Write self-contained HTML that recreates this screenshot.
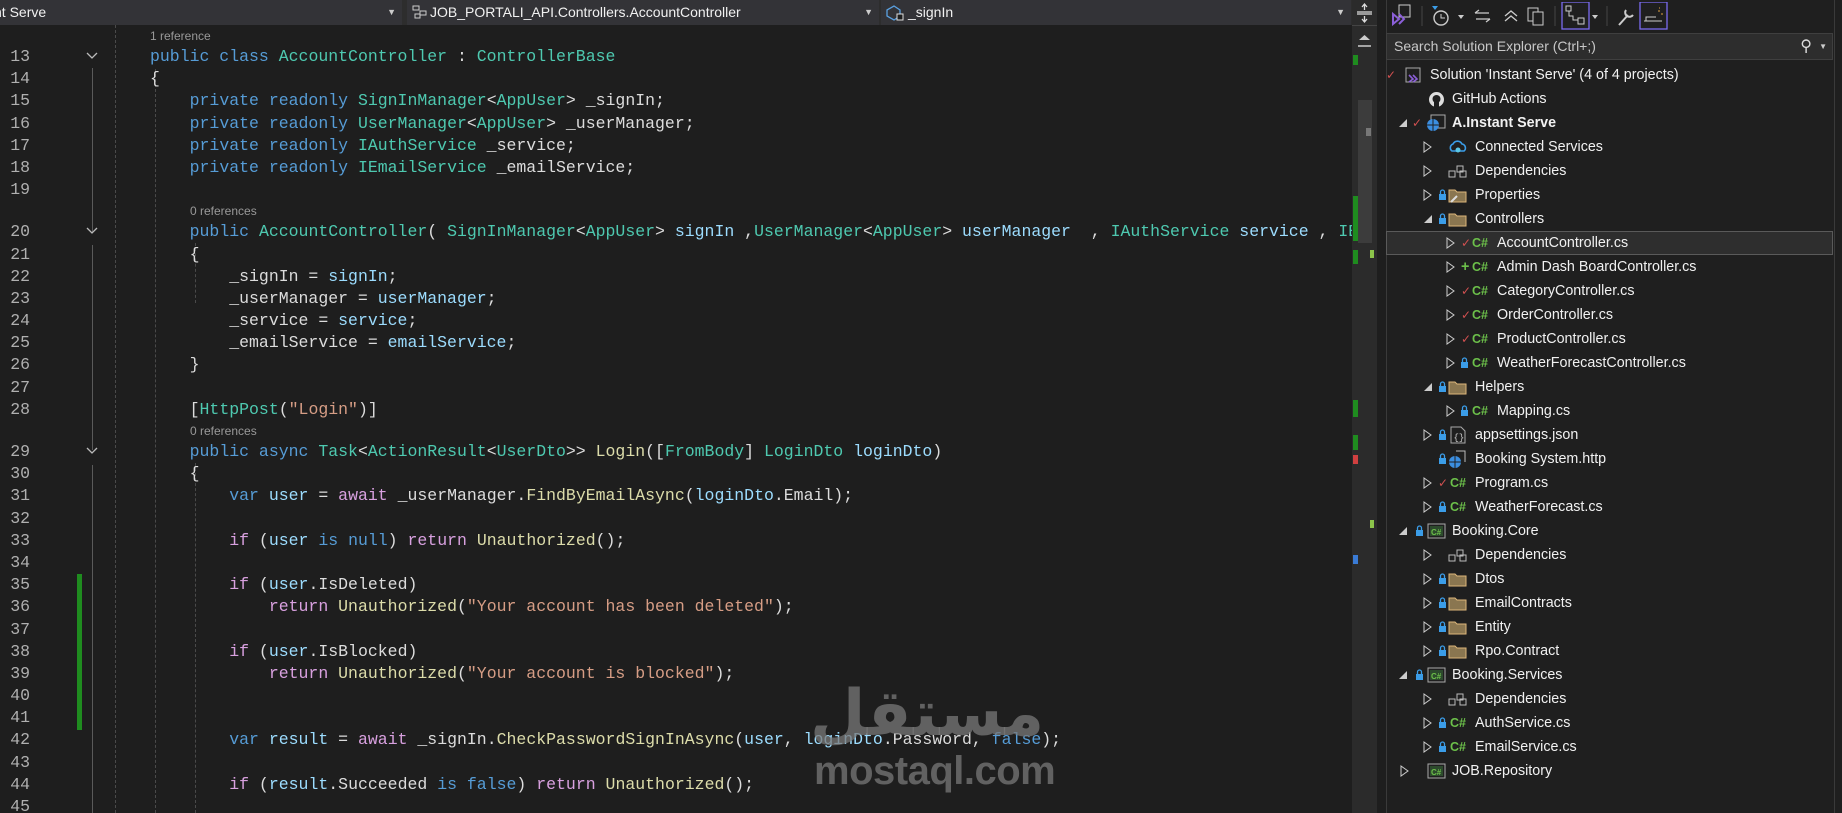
<!DOCTYPE html>
<html><head><meta charset="utf-8">
<style>
*{margin:0;padding:0;box-sizing:border-box}
body{width:1842px;height:813px;background:#1e1e1e;overflow:hidden;position:relative;font-family:"Liberation Sans",sans-serif}
.nav{position:absolute;left:0;top:0;width:1352px;height:25px;background:#2d2d2d}
.dd{position:absolute;top:0;height:25px;background:#333337;color:#f1f1f1;font-size:14px;line-height:25px;white-space:nowrap;overflow:hidden}
.dd .ar{position:absolute;right:6px;top:0;font-size:9px;color:#ccc}
#ed{position:absolute;left:0;top:25px;width:1352px;height:788px;overflow:hidden;background:#1e1e1e}
#code{position:absolute;left:0;top:1px;width:1352px}
.l{height:22.2px;line-height:22.2px;position:relative;white-space:pre;font-family:"Liberation Mono",monospace;font-size:16.5px;color:#dcdcdc}
.l .n{position:absolute;left:0;width:30px;text-align:right;color:#b0b0b0}
.l .t{position:absolute;left:150px}
.cl{height:20px;line-height:20px;position:relative;font-size:12px;color:#999;white-space:pre}
.k{color:#569cd6}.ty{color:#4ec9b0}.v{color:#9cdcfe}.m{color:#dcdcaa}.s{color:#d69d85}.c{color:#d8a0df}
.vl{position:absolute;width:0;border-left:1px solid #5a5a5a}
.dl{position:absolute;width:0;border-left:1px dashed #4a4a4a}
.chev{position:absolute;left:86px;width:12px;height:12px}
#sb{position:absolute;left:1352px;top:0;width:25px;height:813px;background:#2b2b2b}
#se{position:absolute;left:1386px;top:0;width:456px;height:813px;background:#1f1f1f;border-left:1px solid #3a3a3a}
.srch{position:absolute;left:1386px;top:33px;width:447px;height:27px;background:#2d2d2d;border:1px solid #3f3f3f;color:#c8c8c8;font-size:14px;line-height:25px;padding-left:7px}
.r{position:absolute;left:0;height:24px;width:100%;color:#f1f1f1;font-size:14.3px;line-height:24px;white-space:nowrap}
.r span,.r svg{position:absolute}
.cs{color:#6cc04a;font-weight:bold;font-size:12.5px}
.chk{color:#d05050;font-size:12px}
</style></head><body>

<div class="nav">
 <div class="dd" style="left:0;width:402px;padding-left:0"><span style="position:absolute;left:-6px">nt Serve</span><span class="ar">▼</span></div>
 <div class="dd" style="left:407px;width:472px"><svg style="position:absolute;left:5px;top:5px" width="16" height="14"><rect x="1" y="1" width="6" height="4" fill="none" stroke="#ccc"/><rect x="8" y="6" width="6" height="4" fill="none" stroke="#ccc"/><rect x="3" y="9" width="5" height="4" fill="none" stroke="#ccc"/></svg><span style="position:absolute;left:23px">JOB_PORTALI_API.Controllers.AccountController</span><span class="ar">▼</span></div>
 <div class="dd" style="left:881px;width:470px"><svg style="position:absolute;left:4px;top:4px" width="22" height="18"><path d="M2 6 L9 2 L15 6 L15 12 L9 16 L2 12Z" fill="none" stroke="#5aa0e0" stroke-width="1.3"/><rect x="12" y="10" width="6" height="6" fill="#1e1e1e" stroke="#ddd"/></svg><span style="position:absolute;left:27px">_signIn</span><span class="ar">▼</span></div>
</div>

<div id="ed">
 <div class="vl" style="left:92px;top:43px;height:165px"></div>
 <div class="vl" style="left:92px;top:220px;height:205px"></div>
 <div class="vl" style="left:92px;top:440px;height:360px"></div>
 <div class="dl" style="left:115px;top:0;height:788px"></div>
 <div class="dl" style="left:155px;top:44px;height:744px"></div>
 <div class="dl" style="left:195px;top:218px;height:60px"></div>
 <div class="dl" style="left:195px;top:438px;height:350px"></div>
 <div style="position:absolute;left:77px;top:549px;width:5px;height:156px;background:#1f8c1f"></div>
 <svg class="chev" style="top:25px"><path d="M1 3 L6 8 L11 3" fill="none" stroke="#bbb" stroke-width="1.3"/></svg>
 <svg class="chev" style="top:200px"><path d="M1 3 L6 8 L11 3" fill="none" stroke="#bbb" stroke-width="1.3"/></svg>
 <svg class="chev" style="top:420px"><path d="M1 3 L6 8 L11 3" fill="none" stroke="#bbb" stroke-width="1.3"/></svg>
 <div id="code">
  <div class="cl"><span style="position:absolute;left:150px">1 reference</span></div>
  <div class="l"><span class="n">13</span><span class="t"><span class="k">public class</span> <span class="ty">AccountController</span> : <span class="ty">ControllerBase</span></span></div>
  <div class="l"><span class="n">14</span><span class="t">{</span></div>
  <div class="l"><span class="n">15</span><span class="t">    <span class="k">private readonly</span> <span class="ty">SignInManager</span>&lt;<span class="ty">AppUser</span>&gt; _signIn;</span></div>
  <div class="l"><span class="n">16</span><span class="t">    <span class="k">private readonly</span> <span class="ty">UserManager</span>&lt;<span class="ty">AppUser</span>&gt; _userManager;</span></div>
  <div class="l"><span class="n">17</span><span class="t">    <span class="k">private readonly</span> <span class="ty">IAuthService</span> _service;</span></div>
  <div class="l"><span class="n">18</span><span class="t">    <span class="k">private readonly</span> <span class="ty">IEmailService</span> _emailService;</span></div>
  <div class="l"><span class="n">19</span><span class="t"> </span></div>
  <div class="cl"><span style="position:absolute;left:190px">0 references</span></div>
  <div class="l"><span class="n">20</span><span class="t">    <span class="k">public</span> <span class="ty">AccountController</span>( <span class="ty">SignInManager</span>&lt;<span class="ty">AppUser</span>&gt; <span class="v">signIn</span> ,<span class="ty">UserManager</span>&lt;<span class="ty">AppUser</span>&gt; <span class="v">userManager</span>  , <span class="ty">IAuthService</span> <span class="v">service</span> , <span class="ty">IEmailService</span> <span class="v">emailService</span>)</span></div>
  <div class="l"><span class="n">21</span><span class="t">    {</span></div>
  <div class="l"><span class="n">22</span><span class="t">        _signIn = <span class="v">signIn</span>;</span></div>
  <div class="l"><span class="n">23</span><span class="t">        _userManager = <span class="v">userManager</span>;</span></div>
  <div class="l"><span class="n">24</span><span class="t">        _service = <span class="v">service</span>;</span></div>
  <div class="l"><span class="n">25</span><span class="t">        _emailService = <span class="v">emailService</span>;</span></div>
  <div class="l"><span class="n">26</span><span class="t">    }</span></div>
  <div class="l"><span class="n">27</span><span class="t"> </span></div>
  <div class="l"><span class="n">28</span><span class="t">    [<span class="ty">HttpPost</span>(<span class="s">"Login"</span>)]</span></div>
  <div class="cl"><span style="position:absolute;left:190px">0 references</span></div>
  <div class="l"><span class="n">29</span><span class="t">    <span class="k">public async</span> <span class="ty">Task</span>&lt;<span class="ty">ActionResult</span>&lt;<span class="ty">UserDto</span>&gt;&gt; <span class="m">Login</span>([<span class="ty">FromBody</span>] <span class="ty">LoginDto</span> <span class="v">loginDto</span>)</span></div>
  <div class="l"><span class="n">30</span><span class="t">    {</span></div>
  <div class="l"><span class="n">31</span><span class="t">        <span class="k">var</span> <span class="v">user</span> = <span class="c">await</span> _userManager.<span class="m">FindByEmailAsync</span>(<span class="v">loginDto</span>.Email);</span></div>
  <div class="l"><span class="n">32</span><span class="t"> </span></div>
  <div class="l"><span class="n">33</span><span class="t">        <span class="c">if</span> (<span class="v">user</span> <span class="k">is null</span>) <span class="c">return</span> <span class="m">Unauthorized</span>();</span></div>
  <div class="l"><span class="n">34</span><span class="t"> </span></div>
  <div class="l"><span class="n">35</span><span class="t">        <span class="c">if</span> (<span class="v">user</span>.IsDeleted)</span></div>
  <div class="l"><span class="n">36</span><span class="t">            <span class="c">return</span> <span class="m">Unauthorized</span>(<span class="s">"Your account has been deleted"</span>);</span></div>
  <div class="l"><span class="n">37</span><span class="t"> </span></div>
  <div class="l"><span class="n">38</span><span class="t">        <span class="c">if</span> (<span class="v">user</span>.IsBlocked)</span></div>
  <div class="l"><span class="n">39</span><span class="t">            <span class="c">return</span> <span class="m">Unauthorized</span>(<span class="s">"Your account is blocked"</span>);</span></div>
  <div class="l"><span class="n">40</span><span class="t"> </span></div>
  <div class="l"><span class="n">41</span><span class="t"> </span></div>
  <div class="l"><span class="n">42</span><span class="t">        <span class="k">var</span> <span class="v">result</span> = <span class="c">await</span> _signIn.<span class="m">CheckPasswordSignInAsync</span>(<span class="v">user</span>, <span class="v">loginDto</span>.Password, <span class="k">false</span>);</span></div>
  <div class="l"><span class="n">43</span><span class="t"> </span></div>
  <div class="l"><span class="n">44</span><span class="t">        <span class="c">if</span> (<span class="v">result</span>.Succeeded <span class="k">is false</span>) <span class="c">return</span> <span class="m">Unauthorized</span>();</span></div>
  <div class="l"><span class="n">45</span><span class="t"> </span></div>
 </div>
 <div style="position:absolute;left:810px;top:648px;width:220px;text-align:center;font-family:'Noto Sans CJK SC','DejaVu Sans',sans-serif;font-size:64px;font-weight:bold;color:rgba(120,120,120,0.75);line-height:70px">مستقل</div>
 <div style="position:absolute;left:814px;top:723px;font-family:'Liberation Sans',sans-serif;font-size:40px;font-weight:bold;letter-spacing:-0.5px;color:rgba(120,120,120,0.75);line-height:46px">mostaql.com</div>
</div>

<div id="sb">
 <svg style="position:absolute;left:3px;top:3px" width="19" height="20"><path d="M2 9 H17 M2 11 H17 M9.5 1 V7 M7 4 L9.5 1 L12 4 M9.5 19 V13 M7 16 L9.5 19 L12 16" stroke="#ddd" fill="none" stroke-width="1.3"/></svg>
 <div style="position:absolute;left:0;top:25px;width:25px;height:1px;background:#444"></div>
 <svg style="position:absolute;left:6px;top:33px" width="13" height="16"><path d="M1 7 L6.5 2 L12 7Z" fill="#ccc"/><path d="M0 13 H13" stroke="#ccc" stroke-width="1.5"/></svg>
 <div style="position:absolute;left:6px;top:100px;width:14px;height:143px;background:#3c3c3c"></div>
 <div style="position:absolute;left:14px;top:128px;width:5px;height:8px;background:#777"></div>
 <div style="position:absolute;left:1px;top:55px;width:5px;height:10px;background:#1f8c1f"></div>
 <div style="position:absolute;left:1px;top:196px;width:5px;height:45px;background:#1f8c1f"></div>
 <div style="position:absolute;left:1px;top:250px;width:5px;height:14px;background:#1f8c1f"></div>
 <div style="position:absolute;left:1px;top:400px;width:5px;height:17px;background:#1f8c1f"></div>
 <div style="position:absolute;left:1px;top:435px;width:5px;height:15px;background:#1f8c1f"></div>
 <div style="position:absolute;left:1px;top:455px;width:5px;height:9px;background:#d04040"></div>
 <div style="position:absolute;left:1px;top:555px;width:5px;height:9px;background:#3a7bd5"></div>
 <div style="position:absolute;left:18px;top:250px;width:4px;height:8px;background:#8bc34a"></div>
 <div style="position:absolute;left:18px;top:520px;width:4px;height:8px;background:#8bc34a"></div>
</div>

<div id="se">
 <div style="position:absolute;left:0;top:0;width:456px;height:31px;background:#1f1f1f"></div>
</div>
<svg style="position:absolute;left:1390px;top:2px" width="290" height="28">
 <rect x="9" y="3" width="11" height="12" fill="none" stroke="#ccc"/><path d="M3 12 L9 17 L3 22Z M9 12 L14 17 L9 22" fill="none" stroke="#8b5fd8" stroke-width="2"/>
 <path d="M32 4 V24" stroke="#444"/>
 <circle cx="51" cy="16" r="7" fill="none" stroke="#ccc" stroke-width="1.4"/><path d="M51 12 V16 H55" stroke="#ccc" fill="none"/><path d="M42 4 H48 L45 8Z" fill="#3b9de8"/>
 <path d="M68 13 L71 17 L74 13Z" fill="#ccc"/>
 <path d="M85 11 H99 M85 11 L89 8 M100 17 H86 M100 17 L96 20" stroke="#ccc" fill="none" stroke-width="1.3"/>
 <path d="M115 14 L121 9 L127 14 M115 19 L121 14 L127 19" stroke="#ccc" fill="none" stroke-width="1.3"/>
 <rect x="138" y="6" width="10" height="13" fill="none" stroke="#ccc"/><rect x="143" y="10" width="10" height="13" fill="#1f1f1f" stroke="#ccc"/>
 <path d="M165 4 V24" stroke="#444"/>
 <rect x="172" y="0" width="27" height="27" fill="none" stroke="#7b6cf0" stroke-width="1.3"/>
 <rect x="176" y="4" width="5" height="5" fill="none" stroke="#ccc"/><rect x="188" y="16" width="6" height="6" fill="none" stroke="#ccc"/><path d="M179 9 V14 H183 V18 H188" stroke="#ccc" fill="none"/>
 <path d="M202 13 L205 17 L208 13Z" fill="#ccc"/>
 <path d="M217 4 V24" stroke="#444"/>
 <path d="M229 23 L238 13 M236 8 A4 4 0 1 0 243 13" stroke="#ccc" fill="none" stroke-width="2"/>
 <rect x="250" y="0" width="27" height="27" fill="none" stroke="#7b6cf0" stroke-width="1.3"/>
 <path d="M254 19 H272 M256 19 V15 H266" stroke="#ccc" fill="none"/><path d="M268 9 h2 M271 12 h2 M269 6 h1" stroke="#e0a040"/>
</svg>
<div class="srch">Search Solution Explorer (Ctrl+;)<span style="position:absolute;right:20px;top:0;color:#ddd;font-size:16px">⚲</span><span style="position:absolute;right:5px;top:0;font-size:8px;color:#ccc">▼</span></div>

<div style="position:absolute;left:1386px;top:231px;width:447px;height:24px;background:#2e2e2e;border:1px solid #5a5a5a"></div>

<div style="position:absolute;left:1380px;top:63px;width:462px;height:750px">
<div class="r" style="top:0"><span class="chk" style="left:6px">✓</span><svg style="left:24px;top:4px" width="18" height="17"><rect x="2" y="1" width="14" height="14" fill="none" stroke="#aaa"/><path d="M5 8 L9 12 L5 15 M9 8 L13 12 L9 15" stroke="#8b5fd8" fill="none" stroke-width="1.6"/></svg><span style="left:50px">Solution 'Instant Serve' (4 of 4 projects)</span></div>
<div class="r" style="top:24px"><svg style="left:48px;top:4px" width="17" height="17"><circle cx="8.5" cy="8.5" r="7.5" fill="#ddd"/><circle cx="8.5" cy="8" r="4" fill="#1f1f1f"/><rect x="6" y="11" width="5" height="6" fill="#1f1f1f"/></svg><span style="left:72px">GitHub Actions</span></div>
<div class="r" style="top:48px"><svg style="left:18px;top:7px" width="10" height="10"><path d="M9 1 V9 H1Z" fill="#ccc"/></svg><span class="chk" style="left:32px">✓</span><svg style="left:46px;top:3px" width="20" height="18"><rect x="5" y="1" width="14" height="13" fill="none" stroke="#aaa"/><circle cx="7" cy="11" r="6" fill="#3b8ee0"/><path d="M1 11 H13 M7 5 V17" stroke="#1f1f1f"/></svg><span style="left:72px;font-weight:bold">A.Instant Serve</span></div>
<div class="r" style="top:72px"><svg style="left:43px;top:6px" width="10" height="12"><path d="M1 1 L8 6 L1 11Z" fill="none" stroke="#ccc"/></svg><svg style="left:68px;top:4px" width="20" height="17"><path d="M4 12 A4 4 0 0 1 5 5 A5 5 0 0 1 14 5 A4 4 0 0 1 16 12Z" fill="none" stroke="#3b9de8" stroke-width="1.6"/><circle cx="10" cy="11" r="2.5" fill="#5ac8e8"/></svg><span style="left:95px">Connected Services</span></div>
<div class="r" style="top:96px"><svg style="left:43px;top:6px" width="10" height="12"><path d="M1 1 L8 6 L1 11Z" fill="none" stroke="#ccc"/></svg><svg style="left:68px;top:5px" width="20" height="15"><rect x="1" y="7" width="6" height="6" fill="none" stroke="#bbb"/><rect x="9" y="2" width="6" height="6" fill="none" stroke="#bbb"/><rect x="12" y="7" width="6" height="6" fill="none" stroke="#bbb"/></svg><span style="left:95px">Dependencies</span></div>
<div class="r" style="top:120px"><svg style="left:43px;top:6px" width="10" height="12"><path d="M1 1 L8 6 L1 11Z" fill="none" stroke="#ccc"/></svg><svg style="left:58px;top:6px" width="9" height="12"><rect x="1" y="5" width="7" height="6" fill="#3b9de8"/><path d="M2.5 5 V3 A2 2 0 0 1 6.5 3 V5" stroke="#3b9de8" fill="none" stroke-width="1.3"/></svg><svg style="left:68px;top:4px" width="20" height="17"><path d="M1 3 H7 L9 5 H18 V15 H1Z" fill="#8a7650" stroke="#dcb67a"/><path d="M3 15 L9 9" stroke="#ddd" stroke-width="2"/></svg><span style="left:95px">Properties</span></div>
<div class="r" style="top:144px"><svg style="left:43px;top:7px" width="10" height="10"><path d="M9 1 V9 H1Z" fill="#ccc"/></svg><svg style="left:58px;top:6px" width="9" height="12"><rect x="1" y="5" width="7" height="6" fill="#3b9de8"/><path d="M2.5 5 V3 A2 2 0 0 1 6.5 3 V5" stroke="#3b9de8" fill="none" stroke-width="1.3"/></svg><svg style="left:68px;top:4px" width="20" height="17"><path d="M1 3 H7 L9 5 H18 V15 H1Z" fill="#8a7650" stroke="#dcb67a"/></svg><span style="left:95px">Controllers</span></div>
<div class="r" style="top:168px"><svg style="left:66px;top:6px" width="10" height="12"><path d="M1 1 L8 6 L1 11Z" fill="none" stroke="#ccc"/></svg><span class="chk" style="left:81px">✓</span><span class="cs" style="left:92px">C#</span><span style="left:117px">AccountController.cs</span></div>
<div class="r" style="top:192px"><svg style="left:66px;top:6px" width="10" height="12"><path d="M1 1 L8 6 L1 11Z" fill="none" stroke="#ccc"/></svg><span style="left:81px;color:#6cc04a;font-weight:bold">+</span><span class="cs" style="left:92px">C#</span><span style="left:117px">Admin Dash BoardController.cs</span></div>
<div class="r" style="top:216px"><svg style="left:66px;top:6px" width="10" height="12"><path d="M1 1 L8 6 L1 11Z" fill="none" stroke="#ccc"/></svg><span class="chk" style="left:81px">✓</span><span class="cs" style="left:92px">C#</span><span style="left:117px">CategoryController.cs</span></div>
<div class="r" style="top:240px"><svg style="left:66px;top:6px" width="10" height="12"><path d="M1 1 L8 6 L1 11Z" fill="none" stroke="#ccc"/></svg><span class="chk" style="left:81px">✓</span><span class="cs" style="left:92px">C#</span><span style="left:117px">OrderController.cs</span></div>
<div class="r" style="top:264px"><svg style="left:66px;top:6px" width="10" height="12"><path d="M1 1 L8 6 L1 11Z" fill="none" stroke="#ccc"/></svg><span class="chk" style="left:81px">✓</span><span class="cs" style="left:92px">C#</span><span style="left:117px">ProductController.cs</span></div>
<div class="r" style="top:288px"><svg style="left:66px;top:6px" width="10" height="12"><path d="M1 1 L8 6 L1 11Z" fill="none" stroke="#ccc"/></svg><svg style="left:80px;top:6px" width="9" height="12"><rect x="1" y="5" width="7" height="6" fill="#3b9de8"/><path d="M2.5 5 V3 A2 2 0 0 1 6.5 3 V5" stroke="#3b9de8" fill="none" stroke-width="1.3"/></svg><span class="cs" style="left:92px">C#</span><span style="left:117px">WeatherForecastController.cs</span></div>
<div class="r" style="top:312px"><svg style="left:43px;top:7px" width="10" height="10"><path d="M9 1 V9 H1Z" fill="#ccc"/></svg><svg style="left:58px;top:6px" width="9" height="12"><rect x="1" y="5" width="7" height="6" fill="#3b9de8"/><path d="M2.5 5 V3 A2 2 0 0 1 6.5 3 V5" stroke="#3b9de8" fill="none" stroke-width="1.3"/></svg><svg style="left:68px;top:4px" width="20" height="17"><path d="M1 3 H7 L9 5 H18 V15 H1Z" fill="#8a7650" stroke="#dcb67a"/></svg><span style="left:95px">Helpers</span></div>
<div class="r" style="top:336px"><svg style="left:66px;top:6px" width="10" height="12"><path d="M1 1 L8 6 L1 11Z" fill="none" stroke="#ccc"/></svg><svg style="left:80px;top:6px" width="9" height="12"><rect x="1" y="5" width="7" height="6" fill="#3b9de8"/><path d="M2.5 5 V3 A2 2 0 0 1 6.5 3 V5" stroke="#3b9de8" fill="none" stroke-width="1.3"/></svg><span class="cs" style="left:92px">C#</span><span style="left:117px">Mapping.cs</span></div>
<div class="r" style="top:360px"><svg style="left:43px;top:6px" width="10" height="12"><path d="M1 1 L8 6 L1 11Z" fill="none" stroke="#ccc"/></svg><svg style="left:58px;top:6px" width="9" height="12"><rect x="1" y="5" width="7" height="6" fill="#3b9de8"/><path d="M2.5 5 V3 A2 2 0 0 1 6.5 3 V5" stroke="#3b9de8" fill="none" stroke-width="1.3"/></svg><svg style="left:70px;top:3px" width="17" height="18"><path d="M1 1 H11 L15 5 V17 H1Z" fill="none" stroke="#aaa"/><text x="3.5" y="14" font-size="9" fill="#ccc" font-family="Liberation Mono">{}</text></svg><span style="left:95px">appsettings.json</span></div>
<div class="r" style="top:384px"><svg style="left:58px;top:6px" width="9" height="12"><rect x="1" y="5" width="7" height="6" fill="#3b9de8"/><path d="M2.5 5 V3 A2 2 0 0 1 6.5 3 V5" stroke="#3b9de8" fill="none" stroke-width="1.3"/></svg><svg style="left:68px;top:3px" width="20" height="19"><path d="M8 1 H17 V12" fill="none" stroke="#bbb"/><circle cx="7" cy="12" r="6" fill="#3b8ee0"/><path d="M1 12 H13 M7 6 V18" stroke="#1f1f1f"/></svg><span style="left:95px">Booking System.http</span></div>
<div class="r" style="top:408px"><svg style="left:43px;top:6px" width="10" height="12"><path d="M1 1 L8 6 L1 11Z" fill="none" stroke="#ccc"/></svg><span class="chk" style="left:58px">✓</span><span class="cs" style="left:70px">C#</span><span style="left:95px">Program.cs</span></div>
<div class="r" style="top:432px"><svg style="left:43px;top:6px" width="10" height="12"><path d="M1 1 L8 6 L1 11Z" fill="none" stroke="#ccc"/></svg><svg style="left:58px;top:6px" width="9" height="12"><rect x="1" y="5" width="7" height="6" fill="#3b9de8"/><path d="M2.5 5 V3 A2 2 0 0 1 6.5 3 V5" stroke="#3b9de8" fill="none" stroke-width="1.3"/></svg><span class="cs" style="left:70px">C#</span><span style="left:95px">WeatherForecast.cs</span></div>
<div class="r" style="top:456px"><svg style="left:18px;top:7px" width="10" height="10"><path d="M9 1 V9 H1Z" fill="#ccc"/></svg><svg style="left:35px;top:6px" width="9" height="12"><rect x="1" y="5" width="7" height="6" fill="#3b9de8"/><path d="M2.5 5 V3 A2 2 0 0 1 6.5 3 V5" stroke="#3b9de8" fill="none" stroke-width="1.3"/></svg><svg style="left:47px;top:4px" width="19" height="16"><rect x="1" y="1" width="17" height="14" fill="none" stroke="#aaa"/><rect x="3" y="3" width="13" height="10" fill="#2d4a2d"/><text x="4" y="12" font-size="8" fill="#6cc04a" font-weight="bold" font-family="Liberation Sans">C#</text></svg><span style="left:72px">Booking.Core</span></div>
<div class="r" style="top:480px"><svg style="left:43px;top:6px" width="10" height="12"><path d="M1 1 L8 6 L1 11Z" fill="none" stroke="#ccc"/></svg><svg style="left:68px;top:5px" width="20" height="15"><rect x="1" y="7" width="6" height="6" fill="none" stroke="#bbb"/><rect x="9" y="2" width="6" height="6" fill="none" stroke="#bbb"/><rect x="12" y="7" width="6" height="6" fill="none" stroke="#bbb"/></svg><span style="left:95px">Dependencies</span></div>
<div class="r" style="top:504px"><svg style="left:43px;top:6px" width="10" height="12"><path d="M1 1 L8 6 L1 11Z" fill="none" stroke="#ccc"/></svg><svg style="left:58px;top:6px" width="9" height="12"><rect x="1" y="5" width="7" height="6" fill="#3b9de8"/><path d="M2.5 5 V3 A2 2 0 0 1 6.5 3 V5" stroke="#3b9de8" fill="none" stroke-width="1.3"/></svg><svg style="left:68px;top:4px" width="20" height="17"><path d="M1 3 H7 L9 5 H18 V15 H1Z" fill="#8a7650" stroke="#dcb67a"/></svg><span style="left:95px">Dtos</span></div>
<div class="r" style="top:528px"><svg style="left:43px;top:6px" width="10" height="12"><path d="M1 1 L8 6 L1 11Z" fill="none" stroke="#ccc"/></svg><svg style="left:58px;top:6px" width="9" height="12"><rect x="1" y="5" width="7" height="6" fill="#3b9de8"/><path d="M2.5 5 V3 A2 2 0 0 1 6.5 3 V5" stroke="#3b9de8" fill="none" stroke-width="1.3"/></svg><svg style="left:68px;top:4px" width="20" height="17"><path d="M1 3 H7 L9 5 H18 V15 H1Z" fill="#8a7650" stroke="#dcb67a"/></svg><span style="left:95px">EmailContracts</span></div>
<div class="r" style="top:552px"><svg style="left:43px;top:6px" width="10" height="12"><path d="M1 1 L8 6 L1 11Z" fill="none" stroke="#ccc"/></svg><svg style="left:58px;top:6px" width="9" height="12"><rect x="1" y="5" width="7" height="6" fill="#3b9de8"/><path d="M2.5 5 V3 A2 2 0 0 1 6.5 3 V5" stroke="#3b9de8" fill="none" stroke-width="1.3"/></svg><svg style="left:68px;top:4px" width="20" height="17"><path d="M1 3 H7 L9 5 H18 V15 H1Z" fill="#8a7650" stroke="#dcb67a"/></svg><span style="left:95px">Entity</span></div>
<div class="r" style="top:576px"><svg style="left:43px;top:6px" width="10" height="12"><path d="M1 1 L8 6 L1 11Z" fill="none" stroke="#ccc"/></svg><svg style="left:58px;top:6px" width="9" height="12"><rect x="1" y="5" width="7" height="6" fill="#3b9de8"/><path d="M2.5 5 V3 A2 2 0 0 1 6.5 3 V5" stroke="#3b9de8" fill="none" stroke-width="1.3"/></svg><svg style="left:68px;top:4px" width="20" height="17"><path d="M1 3 H7 L9 5 H18 V15 H1Z" fill="#8a7650" stroke="#dcb67a"/></svg><span style="left:95px">Rpo.Contract</span></div>
<div class="r" style="top:600px"><svg style="left:18px;top:7px" width="10" height="10"><path d="M9 1 V9 H1Z" fill="#ccc"/></svg><svg style="left:35px;top:6px" width="9" height="12"><rect x="1" y="5" width="7" height="6" fill="#3b9de8"/><path d="M2.5 5 V3 A2 2 0 0 1 6.5 3 V5" stroke="#3b9de8" fill="none" stroke-width="1.3"/></svg><svg style="left:47px;top:4px" width="19" height="16"><rect x="1" y="1" width="17" height="14" fill="none" stroke="#aaa"/><rect x="3" y="3" width="13" height="10" fill="#2d4a2d"/><text x="4" y="12" font-size="8" fill="#6cc04a" font-weight="bold" font-family="Liberation Sans">C#</text></svg><span style="left:72px">Booking.Services</span></div>
<div class="r" style="top:624px"><svg style="left:43px;top:6px" width="10" height="12"><path d="M1 1 L8 6 L1 11Z" fill="none" stroke="#ccc"/></svg><svg style="left:68px;top:5px" width="20" height="15"><rect x="1" y="7" width="6" height="6" fill="none" stroke="#bbb"/><rect x="9" y="2" width="6" height="6" fill="none" stroke="#bbb"/><rect x="12" y="7" width="6" height="6" fill="none" stroke="#bbb"/></svg><span style="left:95px">Dependencies</span></div>
<div class="r" style="top:648px"><svg style="left:43px;top:6px" width="10" height="12"><path d="M1 1 L8 6 L1 11Z" fill="none" stroke="#ccc"/></svg><svg style="left:58px;top:6px" width="9" height="12"><rect x="1" y="5" width="7" height="6" fill="#3b9de8"/><path d="M2.5 5 V3 A2 2 0 0 1 6.5 3 V5" stroke="#3b9de8" fill="none" stroke-width="1.3"/></svg><span class="cs" style="left:70px">C#</span><span style="left:95px">AuthService.cs</span></div>
<div class="r" style="top:672px"><svg style="left:43px;top:6px" width="10" height="12"><path d="M1 1 L8 6 L1 11Z" fill="none" stroke="#ccc"/></svg><svg style="left:58px;top:6px" width="9" height="12"><rect x="1" y="5" width="7" height="6" fill="#3b9de8"/><path d="M2.5 5 V3 A2 2 0 0 1 6.5 3 V5" stroke="#3b9de8" fill="none" stroke-width="1.3"/></svg><span class="cs" style="left:70px">C#</span><span style="left:95px">EmailService.cs</span></div>
<div class="r" style="top:696px"><svg style="left:20px;top:6px" width="10" height="12"><path d="M1 1 L8 6 L1 11Z" fill="none" stroke="#ccc"/></svg><svg style="left:47px;top:4px" width="19" height="16"><rect x="1" y="1" width="17" height="14" fill="none" stroke="#aaa"/><rect x="3" y="3" width="13" height="10" fill="#2d4a2d"/><text x="4" y="12" font-size="8" fill="#6cc04a" font-weight="bold" font-family="Liberation Sans">C#</text></svg><span style="left:72px">JOB.Repository</span></div>
</div>
<div style="position:absolute;left:1834px;top:0;width:1px;height:813px;background:#3a3a3a"></div>
</body></html>
